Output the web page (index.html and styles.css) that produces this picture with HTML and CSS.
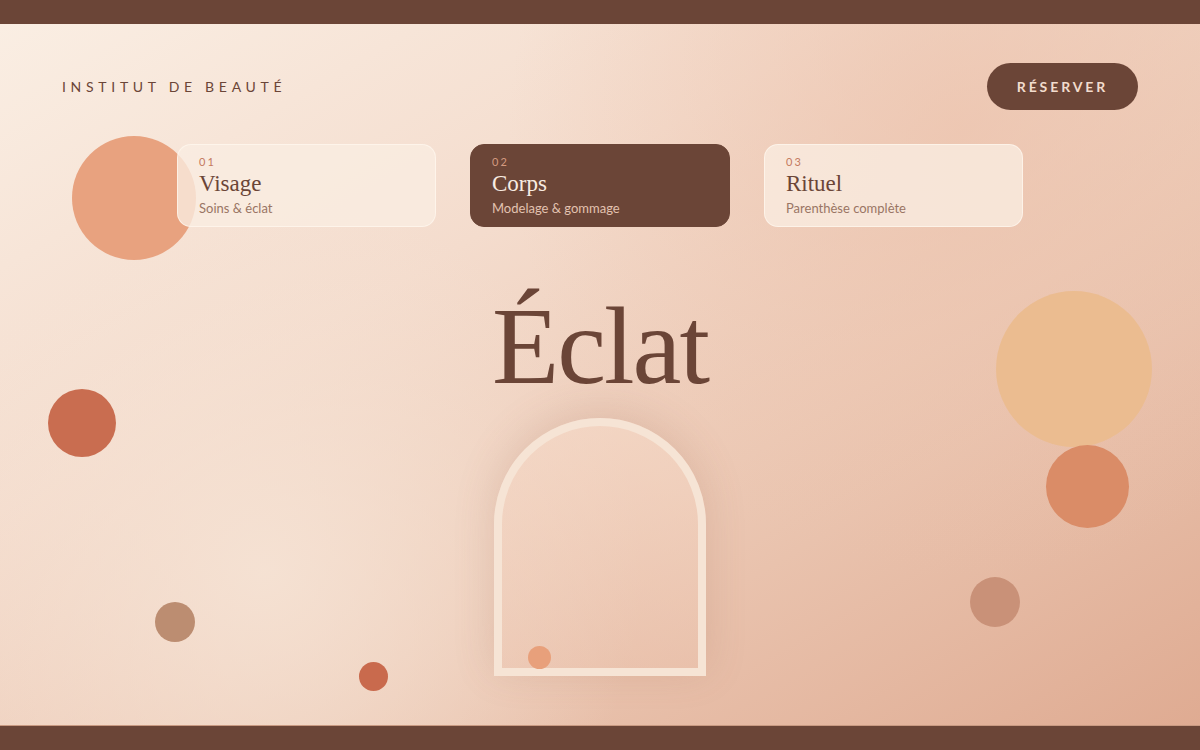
FILE: index.html
```html
<!DOCTYPE html>
<html lang="fr">
<head>
<meta charset="utf-8">
<title>Institut de beauté</title>
<link rel="stylesheet" href="styles.css">
</head>
<body>
<div class="bar"></div>
<main class="stage">
  <span class="dot dot-a"></span>
  <span class="dot dot-b"></span>
  <span class="dot dot-c"></span>
  <span class="dot dot-d"></span>
  <span class="dot dot-e"></span>
  <span class="dot dot-f"></span>
  <span class="dot dot-g"></span>

  <header class="top">
    <div class="brand">INSTITUT DE BEAUTÉ</div>
    <button class="cta">RÉSERVER</button>
  </header>

  <nav class="cards">
    <div class="card">
      <div class="num">01</div>
      <div class="ttl">Visage</div>
      <div class="sub">Soins &amp; éclat</div>
    </div>
    <div class="card active">
      <div class="num">02</div>
      <div class="ttl">Corps</div>
      <div class="sub">Modelage &amp; gommage</div>
    </div>
    <div class="card">
      <div class="num">03</div>
      <div class="ttl">Rituel</div>
      <div class="sub">Parenthèse complète</div>
    </div>
  </nav>

  <h1 class="hero">Éclat</h1>

  <div class="arch"><span class="arch-dot"></span></div>
</main>
<div class="bar"></div>
</body>
</html>
```

FILE: styles.css
```css
* { box-sizing: border-box; }
html, body { margin: 0; padding: 0; }
body {
  width: 1200px;
  height: 750px;
  overflow: hidden;
  display: flex;
  flex-direction: column;
  font-family: "Lato", "Open Sans", sans-serif;
  color: #6b4537;
}
.bar {
  height: 24px;
  flex: 0 0 24px;
  background: #6b4537;
}
.bar:last-child { height: 25px; flex-basis: 25px; border-top: 1px solid #c99a82; }
.stage {
  position: relative;
  flex: 1;
  overflow: hidden;
  display: flex;
  flex-direction: column;
  align-items: center;
  background:
    radial-gradient(circle at 22% 78%, rgba(246,228,214,0.85) 0%, rgba(246,228,214,0) 35%),
    radial-gradient(circle at 80% 15%, rgba(236,194,172,0.7) 0%, rgba(236,194,172,0) 40%),
    linear-gradient(150deg, #faeee3 0%, #f4dccd 35%, #ecc9b5 62%, #dfab92 100%);
}
.dot {
  position: absolute;
  border-radius: 50%;
}
.dot-a { left: 72px; top: 112px; width: 124px; height: 124px; background: #e8a27f; }
.dot-b { left: 48px; top: 365px; width: 68px; height: 68px; background: #c96d50; }
.dot-c { left: 155px; top: 578px; width: 40px; height: 40px; background: #bc8d71; }
.dot-d { left: 359px; top: 638px; width: 29px; height: 29px; background: #c96a4d; }
.dot-e { left: 996px; top: 267px; width: 156px; height: 156px; background: #ebbc90; }
.dot-f { left: 1046px; top: 421px; width: 83px; height: 83px; background: #da8c67; }
.dot-g { left: 970px; top: 553px; width: 50px; height: 50px; background: #c99178; }

.top {
  position: relative;
  align-self: stretch;
  display: flex;
  justify-content: space-between;
  align-items: center;
  padding: 39px 62px 0 62px;
}
.brand {
  font-size: 14px;
  letter-spacing: 4.7px;
  color: #6b4537;
}
.cta {
  font-family: "Lato", sans-serif;
  font-size: 14px;
  font-weight: 700;
  letter-spacing: 2.9px;
  text-indent: 0;
  color: #f2dccd;
  background: #6b4537;
  border: none;
  border-radius: 24px;
  height: 47px;
  width: 151px;
  padding: 0;
}

.cards {
  position: relative;
  display: flex;
  gap: 34px;
  margin-top: 34px;
}
.card {
  width: 259px;
  height: 83px;
  border-radius: 14px;
  padding: 10px 21px 0;
  background: rgba(250, 237, 225, 0.78);
  border: 1px solid rgba(255, 248, 240, 0.7);
}
.card.active {
  background: #6b4537;
  border-color: #6b4537;
  width: 260px;
}
.num {
  font-size: 11px;
  letter-spacing: 2.2px;
  color: #c47a5e;
  line-height: 14px;
}
.ttl {
  font-family: "Liberation Serif", "DejaVu Serif", serif;
  font-size: 23px;
  line-height: 28px;
  margin-top: 1px;
  color: #6b4537;
}
.sub {
  font-size: 13px;
  line-height: 16px;
  color: #9a7564;
  margin-top: 2px;
}
.active .num { color: #d49a80; }
.active .ttl { color: #f8ece2; }
.active .sub { color: #e2c2b0; }

.hero {
  position: relative;
  margin: 59px 0 0;
  font-family: "Liberation Serif", "DejaVu Serif", serif;
  font-weight: 400;
  font-size: 110px;
  line-height: 120px;
  color: #6b4537;
  letter-spacing: -2px;
}
.arch {
  position: relative;
  margin-top: 12px;
  width: 212px;
  height: 258px;
  border: 8px solid #f6e4d5;
  border-radius: 106px 106px 0 0;
  background: linear-gradient(180deg, rgba(245,216,198,0.6), rgba(236,196,175,0.4));
  box-shadow: 0 -6px 40px rgba(150, 95, 70, 0.18);
}
.arch-dot {
  position: absolute;
  left: 26px;
  bottom: -1px;
  width: 23px;
  height: 23px;
  border-radius: 50%;
  background: #e8a07b;
}
```
